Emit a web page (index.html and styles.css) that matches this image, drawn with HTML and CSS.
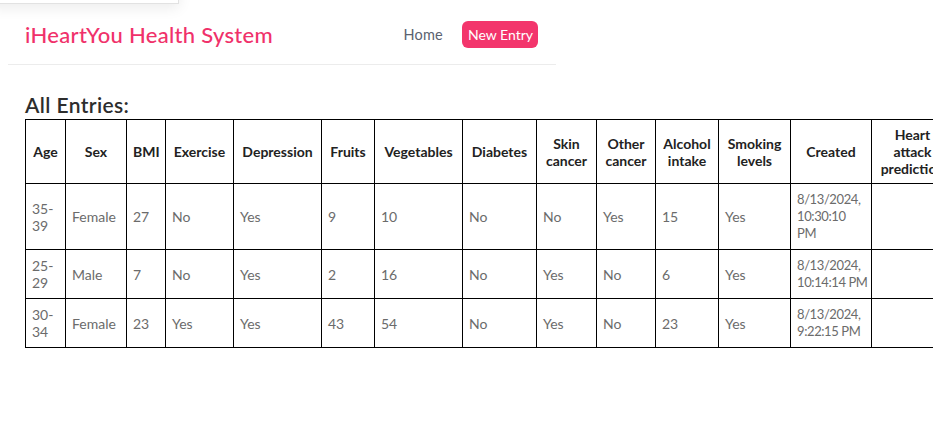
FILE: index.html
```html
<!DOCTYPE html>
<html lang="en">
<head>
<meta charset="utf-8">
<title>iHeartYou Health System</title>
<link rel="stylesheet" href="styles.css">
</head>
<body>
<div class="ghost-popup"></div>
<nav class="navbar">
  <span class="brand">iHeartYou Health System</span>
  <div class="nav-links">
    <a class="nav-link" href="#">Home</a>
    <a class="nav-btn" href="#">New Entry</a>
  </div>
</nav>
<main class="content">
  <h2 class="title">All Entries:</h2>
  <table class="entries">
    <colgroup>
      <col class="c-age"><col class="c-sex"><col class="c-bmi"><col class="c-ex"><col class="c-dep"><col class="c-fr"><col class="c-veg"><col class="c-dia"><col class="c-skin"><col class="c-oth"><col class="c-alc"><col class="c-smk"><col class="c-cre"><col class="c-heart">
    </colgroup>
    <thead>
      <tr>
        <th>Age</th><th>Sex</th><th>BMI</th><th>Exercise</th><th>Depression</th><th>Fruits</th><th>Vegetables</th><th>Diabetes</th><th>Skin cancer</th><th>Other cancer</th><th>Alcohol intake</th><th>Smoking levels</th><th>Created</th><th>Heart attack prediction</th>
      </tr>
    </thead>
    <tbody>
      <tr>
        <td>35-39</td><td>Female</td><td>27</td><td>No</td><td>Yes</td><td>9</td><td>10</td><td>No</td><td>No</td><td>Yes</td><td>15</td><td>Yes</td><td class="date">8/13/2024, 10:30:10 PM</td><td></td>
      </tr>
      <tr>
        <td>25-29</td><td>Male</td><td>7</td><td>No</td><td>Yes</td><td>2</td><td>16</td><td>No</td><td>Yes</td><td>No</td><td>6</td><td>Yes</td><td class="date">8/13/2024, <span class="nw">10:14:14 PM</span></td><td></td>
      </tr>
      <tr>
        <td>30-34</td><td>Female</td><td>23</td><td>Yes</td><td>Yes</td><td>43</td><td>54</td><td>No</td><td>Yes</td><td>No</td><td>23</td><td>Yes</td><td class="date">8/13/2024, <span class="nw">9:22:15 PM</span></td><td></td>
      </tr>
    </tbody>
  </table>
</main>
</body>
</html>
```
FILE: styles.css
```css
html {
  margin: 0;
  padding: 0;
  background: #fff;
  overflow: hidden;
  scrollbar-width: none;
}
html::-webkit-scrollbar,
body::-webkit-scrollbar {
  display: none;
  width: 0;
  height: 0;
}
body {
  margin: 8px;
  width: 960px;
  font-family: Lato, "Noto Sans", sans-serif;
  color: #333;
}
.ghost-popup {
  position: absolute;
  left: -10px;
  top: -40px;
  width: 187px;
  height: 42px;
  background: #fff;
  border: 1px solid #e2e2e2;
  box-shadow: 0 4px 14px rgba(0,0,0,0.08);
}
.navbar {
  width: 548px;
  height: 57px;
  display: flex;
  align-items: center;
  justify-content: space-between;
  padding: 0 18px 4px 17px;
  box-sizing: border-box;
  border-bottom: 1px solid #ececec;
}
.brand {
  color: #f0316a;
  font-size: 22px;
  font-weight: 500;
  letter-spacing: 0.3px;
  margin-top: 1px;
}
.nav-links {
  display: flex;
  align-items: center;
  gap: 19px;
}
.nav-link {
  color: #5a6270;
  text-decoration: none;
  font-size: 14.5px;
  letter-spacing: 0.2px;
}
.nav-btn {
  background: #f3356c;
  color: #fff;
  text-decoration: none;
  font-size: 14px;
  height: 27px;
  line-height: 27px;
  padding: 0 5px 0 6px;
  border-radius: 6px;
}
.content {
  padding: 0 0 0 17px;
}
.title {
  margin: 29px 0 3px;
  font-size: 21px;
  font-weight: 600;
  line-height: 22px;
  letter-spacing: 0.4px;
  color: #2d2d2d;
}
.entries {
  border-collapse: collapse;
  table-layout: fixed;
  width: 926px;
  font-size: 14px;
  line-height: 17px;
}
.entries th, .entries td {
  border: 1px solid #000;
  padding: 7px 6px;
  vertical-align: middle;
}
.entries th {
  font-weight: 700;
  color: #222;
  text-align: center;
  padding-top: 6px;
  padding-bottom: 6px;
}
.entries th:last-child {
  padding-left: 8px;
}
.entries td {
  color: #6b6b6b;
  text-align: left;
  font-weight: 400;
}
.entries td.date {
  letter-spacing: -0.4px;
  font-size: 13px;
}
.nw {
  white-space: nowrap;
}
.c-age { width: 40px; }
.c-sex { width: 61px; }
.c-bmi { width: 39px; }
.c-ex { width: 68px; }
.c-dep { width: 88px; }
.c-fr { width: 53px; }
.c-veg { width: 88px; }
.c-dia { width: 74px; }
.c-skin { width: 60px; }
.c-oth { width: 59px; }
.c-alc { width: 63px; }
.c-smk { width: 72px; }
.c-cre { width: 81px; }
.c-heart { width: 80px; }
```
